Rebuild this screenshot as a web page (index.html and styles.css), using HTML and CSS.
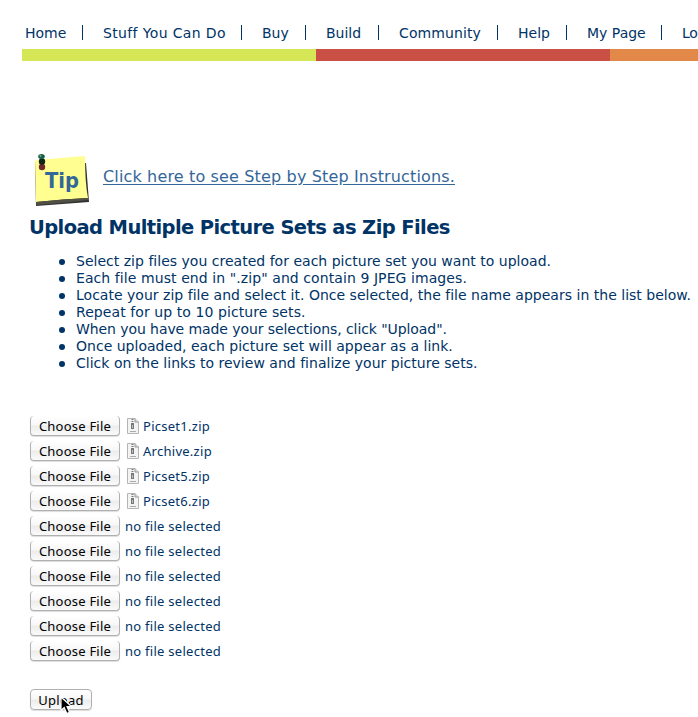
FILE: index.html
```html
<!DOCTYPE html>
<html lang="en">
<head>
<meta charset="utf-8">
<title>Upload Picture Sets</title>
<link rel="stylesheet" href="styles.css">
</head>
<body>
<nav class="nav">
<a class="w78">Home</a><a class="w159">Stuff You Can Do</a><a class="w64">Buy</a><a class="w73">Build</a><a class="w119">Community</a><a class="w69">Help</a><a class="w95">My Page</a><a class="last">Lo</a>
</nav>
<div class="stripe"><span class="lime"></span><span class="red"></span><span class="orange"></span></div>
<main class="content">
<div class="tip">
<svg class="note" width="60" height="56" viewBox="0 0 60 56">
<defs><filter id="soft"><feGaussianBlur stdDeviation="0.7"/></filter></defs>
<path d="M5 9L6 53L59 49L56 10Z" fill="#333" filter="url(#soft)"/>
<path d="M5 7L55 3Q55 30 58 45Q34 46 6 49Z" fill="#ffff91"/>
<path d="M6 49Q34 46 58 45L58 47Q34 50 6 52Z" fill="#505044"/>
<circle cx="12" cy="14" r="3.2" fill="#6c2a29"/>
<ellipse cx="12" cy="8.5" rx="3.2" ry="3.2" fill="#10251b"/><ellipse cx="11.500" cy="3.500" rx="3.300" ry="2.500" fill="#176044"/>
<circle cx="10.500" cy="3" r="1" fill="#74a98a"/>
<text x="15" y="35" class="tiptext" textLength="34" lengthAdjust="spacingAndGlyphs">Tip</text>
</svg>
<a class="steps">Click here to see Step by Step Instructions.</a>
</div>
<h1>Upload Multiple Picture Sets as Zip Files</h1>
<ul>
<li>Select zip files you created for each picture set you want to upload.</li>
<li class="wider">Each file must end in ".zip" and contain 9 JPEG images.</li>
<li>Locate your zip file and select it. Once selected, the file name appears in the list below.</li>
<li class="wider">Repeat for up to 10 picture sets.</li>
<li class="narrower">When you have made your selections, click "Upload".</li>
<li>Once uploaded, each picture set will appear as a link.</li>
<li>Click on the links to review and finalize your picture sets.</li>
</ul>
<svg width="0" height="0" class="symbols"><symbol id="zip" viewBox="0 0 12 16"><path d="M.5.5H8L11.500 4V15.500H.5Z" fill="#f3f3f3" stroke="#b5b5b5"/><path d="M8 .5V4H11.500" fill="#ddd" stroke="#999"/><path d="M5.500 1V6" stroke="#777" stroke-width="2" stroke-dasharray="1 1"/><path d="M4 5H7V11H4Z" fill="#777"/><path d="M5 7H6V10H5Z" fill="#bbb"/><path d="M3 13.500H9" stroke="#aaa"/></symbol></svg>
<div class="files">
<div class="file"><button>Choose File</button><svg class="zip"><use href="#zip"/></svg><span>Picset1.zip</span></div>
<div class="file"><button>Choose File</button><svg class="zip"><use href="#zip"/></svg><span>Archive.zip</span></div>
<div class="file"><button>Choose File</button><svg class="zip"><use href="#zip"/></svg><span>Picset5.zip</span></div>
<div class="file"><button>Choose File</button><svg class="zip"><use href="#zip"/></svg><span>Picset6.zip</span></div>
<div class="file"><button>Choose File</button><span class="none">no file selected</span></div>
<div class="file"><button>Choose File</button><span class="none">no file selected</span></div>
<div class="file"><button>Choose File</button><span class="none">no file selected</span></div>
<div class="file"><button>Choose File</button><span class="none">no file selected</span></div>
<div class="file"><button>Choose File</button><span class="none">no file selected</span></div>
<div class="file"><button>Choose File</button><span class="none">no file selected</span></div>
</div>
<div class="submit"><button class="upload">Upload</button>
<svg class="cursor" width="14" height="19" viewBox="0 0 14 19"><path d="M1 1V14.500L4.200 11.500L6.800 17.500L9.500 16.300L7 10.500H11.500Z" fill="#000" stroke="#fff" stroke-width="1.200"/></svg></div>
</main>
</body>
</html>
```

FILE: styles.css
```css
* { box-sizing: border-box; }
body { margin: 0; width: 698px; height: 717px; overflow: hidden; background: #fff; color: #003366; font-family: "DejaVu Sans", Verdana, sans-serif; }
.nav { display: flex; width: 698px; height: 49px; padding: 24px 0 0 25px; font-size: 14px; line-height: 18px; }
.nav a { flex: none; height: 17px; white-space: nowrap; display: flex; justify-content: space-between; }
.nav a::after { content: ""; width: 1px; height: 15px; margin: 1px 20px 0 0; background: #003366; }
.nav .last::after { display: none; }
.nav .last { width: 16px; letter-spacing: -.2px; }
.w78 { width: 78px; }
.w159 { width: 159px; letter-spacing: .36px; }
.w64 { width: 64px; }
.w73 { width: 73px; }
.w119 { width: 119px; letter-spacing: .1px; }
.w69 { width: 69px; }
.w95 { width: 95px; }
.stripe { display: flex; height: 12px; margin-left: 22px; }
.lime { width: 294px; background: #d5e756; }
.red { width: 294px; background: #ca5045; }
.orange { flex: 1; background: #e2894a; }
.content { padding: 88px 0 0 29px; }
.tip { display: flex; height: 59px; }
.note { flex: none; margin: 4px 10px 0 1px; }
.tiptext { font: bold 21px "DejaVu Sans", sans-serif; fill: #336699; }
.steps { margin: 18px 0 0 3px; font-size: 16px; line-height: 20px; letter-spacing: .15px; color: #336699; text-decoration: underline; text-underline-offset: 2px; white-space: nowrap; }
h1 { margin: 8px 0 0; font-size: 19.5px; line-height: 24px; letter-spacing: -.6px; white-space: nowrap; }
ul { margin: 13px 0 0; padding: 0 0 0 47px; list-style: none; font-size: 14px; line-height: 17px; white-space: nowrap; }
li { position: relative; letter-spacing: .015px; }
li::before { content: ""; position: absolute; left: -17px; top: 6px; width: 6px; height: 6px; border-radius: 50%; background: #003366; }
.wider { letter-spacing: .08px; }
.narrower { letter-spacing: -.08px; }
.symbols { display: block; }
.files { margin-top: 44px; }
.file { display: flex; height: 25px; align-items: flex-start; font: 13px/20px "Noto Sans", sans-serif; letter-spacing: .27px; }
button { flex: none; width: 90px; height: 22px; margin: 0 0 0 1px; padding: 0; border: 1px solid #b0b0b0; border-radius: 4px; background: linear-gradient(#fff 0%, #f7f7f7 48%, #ececec 52%, #fafafa 100%); color: #000; font: 13px/20px "Noto Sans", sans-serif; letter-spacing: .22px; box-shadow: 0 1px 1px #ddd; }
.file button { height: 20px; border-top: 0; }
.zip { width: 12px; height: 16px; margin: 2px 4px 0 7px; }
.file span { line-height: 21px; white-space: nowrap; }
.file .none { margin-left: 5px; }
.submit { position: relative; margin-top: 23px; }
.upload { width: 62px; height: 21px; display: block; }
.cursor { position: absolute; left: 31px; top: 7px; }
```
